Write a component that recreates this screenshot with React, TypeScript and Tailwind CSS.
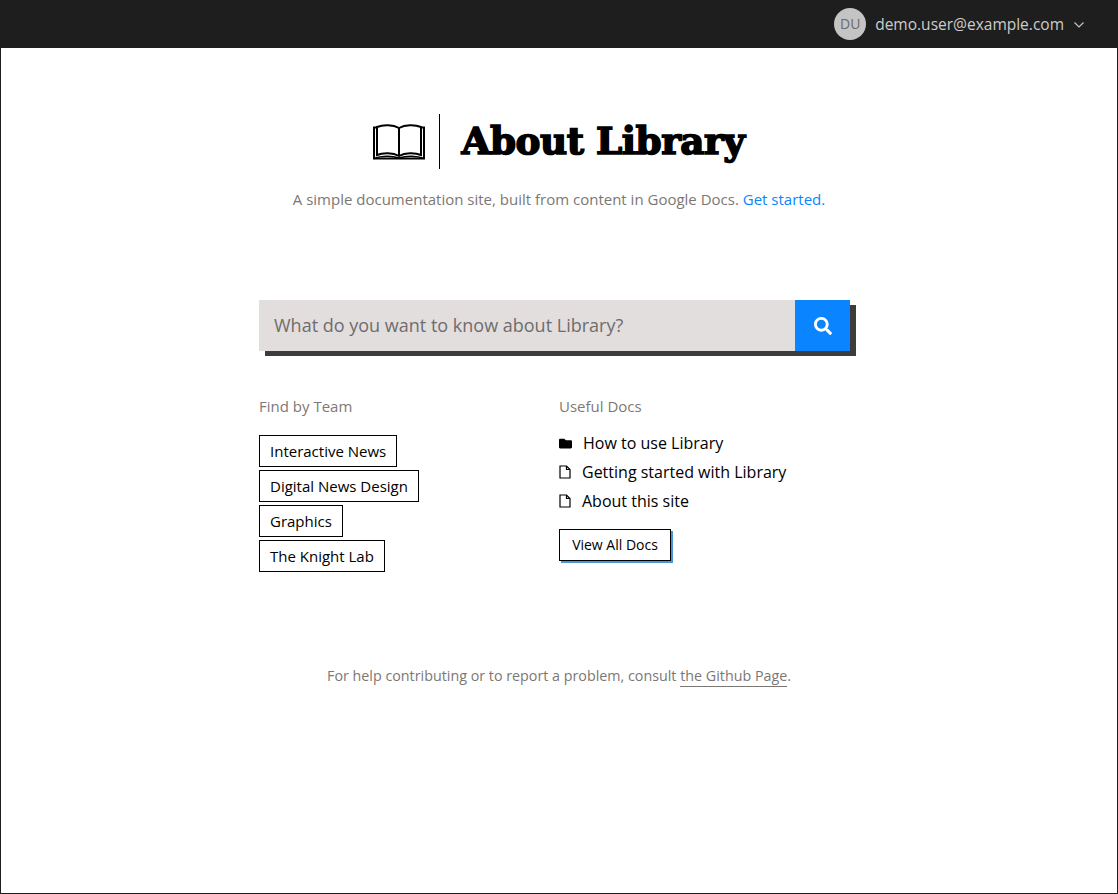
import { FaFolder, FaSearch } from "react-icons/fa";

const TEAMS = ["Interactive News", "Digital News Design", "Graphics", "The Knight Lab"];

function BookIcon() {
  return (
    <svg width="52" height="36" viewBox="0 0 52 36" fill="none" stroke="#000" className="shrink-0">
      <path d="M4 3.5H1V34.5H51V3.5H48" strokeWidth="2" />
      <path d="M4 31V3C10 0.5 20 0.5 26 4C32 0.5 42 0.5 48 3V31C42 28.5 32 28.5 26 32C20 28.5 10 28.5 4 31Z" strokeWidth="2" fill="#fff" />
      <path d="M26 4V32" strokeWidth="2" />
      <path d="M1 34.5C8 31.5 19 31.5 26 34C33 31.5 44 31.5 51 34.5" strokeWidth="1.5" />
    </svg>
  );
}

function FileIcon() {
  return (
    <svg width="12" height="14" viewBox="0 0 12 14" fill="none" stroke="#000" strokeWidth="1.2" className="shrink-0 mr-[11px]">
      <path d="M1 1H7.5L11 4.5V13H1Z" />
      <path d="M7.5 1V4.5H11" />
    </svg>
  );
}

export default function App() {
  return (
    <div className="min-h-[894px] flex flex-col bg-white border border-t-0 border-[#1e1e1e] font-['Open_Sans',sans-serif] text-black">
      <header className="h-12 -mx-px bg-[#1e1e1e] flex items-center justify-end pr-[34px] text-[#cccccc]">
        <div className="w-8 h-8 rounded-full bg-[#c4c4c4] text-[#6b6b6b] text-sm flex items-center justify-center">DU</div>
        <span className="ml-[9px] pt-[2px] text-[15.5px]">demo.user@example.com</span>
        <svg width="10" height="6" viewBox="0 0 10 6" fill="none" stroke="#c4c4c4" strokeWidth="1.2" className="ml-[10px] mt-px">
          <path d="M0.5 0.5L5 5L9.5 0.5" />
        </svg>
      </header>

      <main className="flex-1 flex flex-col items-center">
        <div className="mt-[66px] flex items-center h-[55px]">
          <BookIcon />
          <div className="ml-[14px] w-px h-[55px] bg-black" />
          <h1 className="ml-[21px] text-[37.4px] leading-none font-bold tracking-[-0.5px] font-['DejaVu_Serif',serif] [-webkit-text-stroke:1.6px_black]">
            About Library
          </h1>
        </div>
        <p className="mt-[20px] text-[15px] leading-5 text-[#7c7774]">
          A simple documentation site, built from content in Google Docs.{" "}
          <a className="text-[#0a85ff]">Get started.</a>
        </p>

        <div className="w-[600px] mt-[91px]">
          <div className="flex w-[591px] h-[51px] shadow-[6px_5px_0_#3c3c3c]">
            <div className="flex-1 bg-[#e2dede] flex items-center pl-[15px] pb-[2px] text-lg text-[#706c6c]">
              What do you want to know about Library?
            </div>
            <button className="w-[55px] bg-[#0a85ff] flex items-center justify-center text-white">
              <FaSearch className="w-[18px] h-[18px]" />
            </button>
          </div>

          <div className="mt-[45px] flex">
            <section className="w-[300px]">
              <h2 className="text-[15px] leading-5 font-normal text-[#7f7874]">Find by Team</h2>
              <div className="mt-[19px] flex flex-col items-start gap-[3px]">
                {TEAMS.map((team) => (
                  <a key={team} className="h-8 px-[10px] border border-black flex items-center text-[15px]">
                    {team}
                  </a>
                ))}
              </div>
            </section>

            <section>
              <h2 className="text-[15px] leading-5 font-normal text-[#7f7874]">Useful Docs</h2>
              <ul className="mt-[17px] flex flex-col gap-[9px] text-base leading-5">
                <li className="flex items-center">
                  <FaFolder className="w-[13px] h-[13px] mr-[11px]" />
                  How to use Library
                </li>
                <li className="flex items-center">
                  <FileIcon />
                  Getting started with Library
                </li>
                <li className="flex items-center">
                  <FileIcon />
                  About this site
                </li>
              </ul>
              <button className="mt-[18px] h-8 w-[112px] border border-black bg-white text-sm shadow-[2px_2px_0_#4a94d8]">
                View All Docs
              </button>
            </section>
          </div>
        </div>

        <p className="mt-[94px] text-[14.3px] leading-5 text-[#7c7774]">
          For help contributing or to report a problem, consult{" "}
          <a className="border-b border-[#7c7774] pb-px">the Github Page</a>.
        </p>
      </main>
    </div>
  );
}
